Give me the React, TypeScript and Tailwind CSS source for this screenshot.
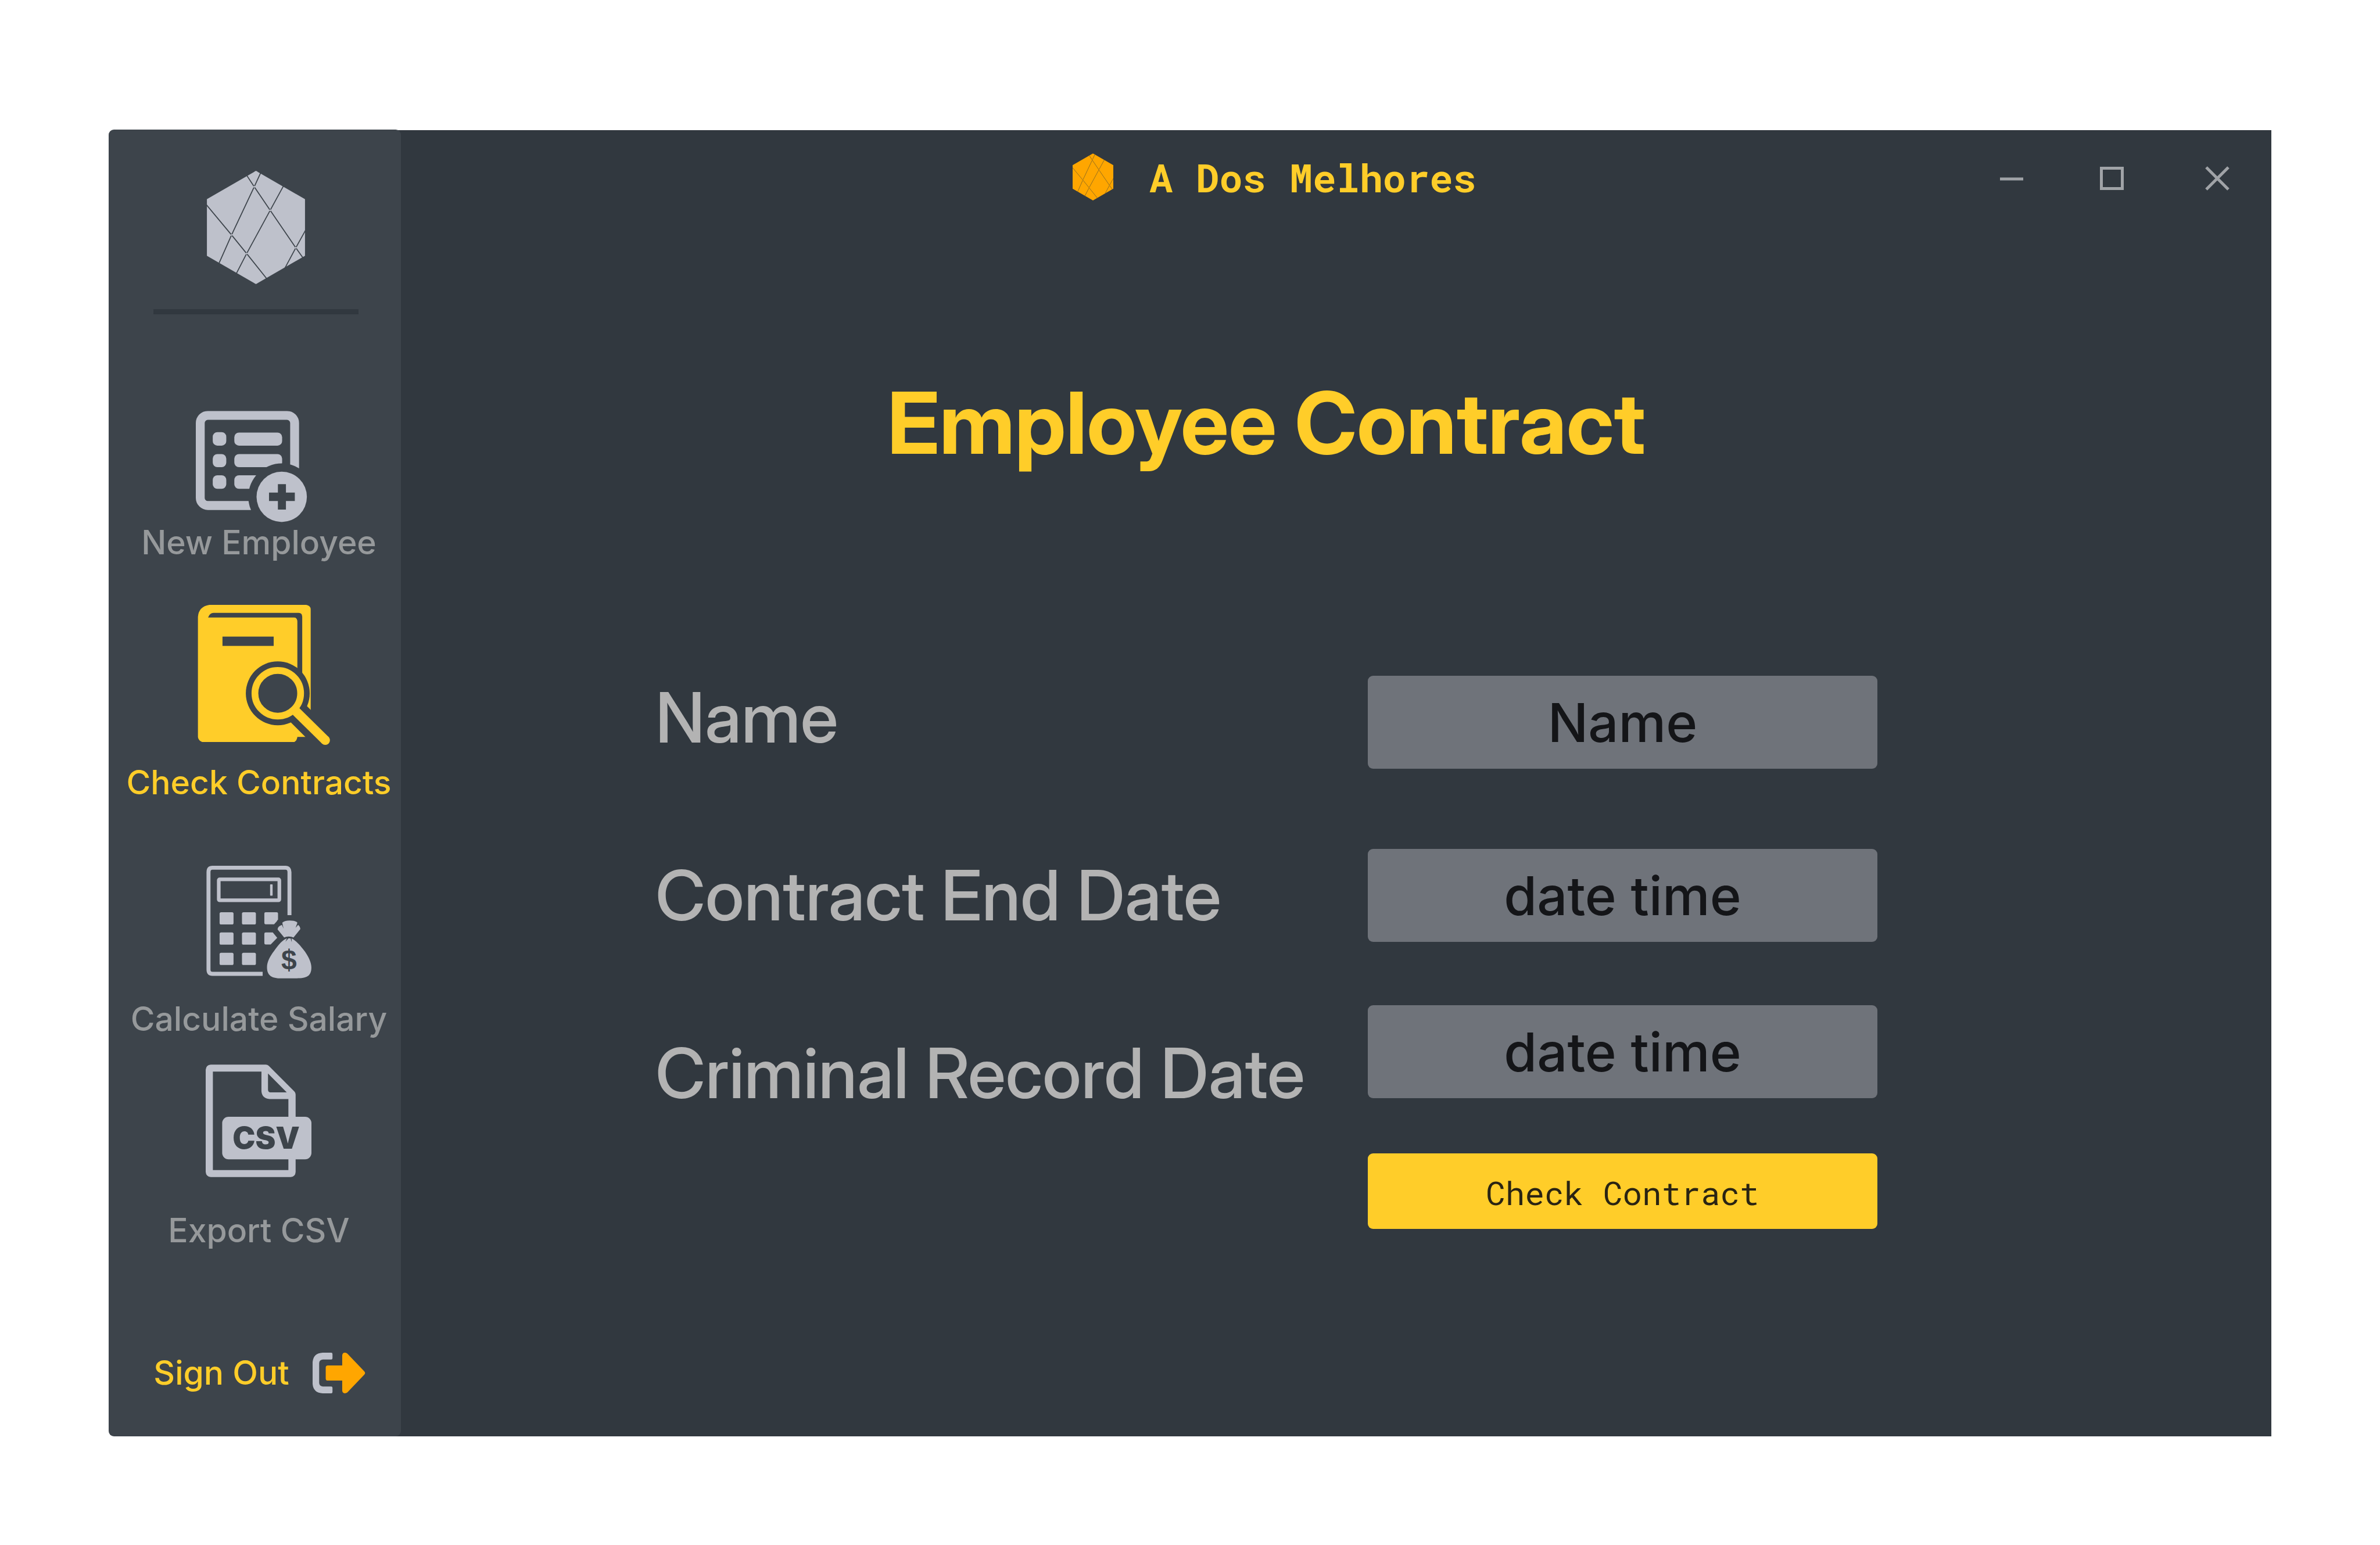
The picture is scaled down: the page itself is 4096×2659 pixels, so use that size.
import type { ReactNode } from "react";

/** Faceted hexagon used as the company mark. */
function HexLogo({ className, line }: { className: string; line: string }) {
  return (
    <svg viewBox="0 0 232 268" className={className} aria-hidden="true">
      <path
        d="M112 2.500Q116 -1.500 120 2.500L232 67V201L120 265.500Q116 269.500 112 265.500L0 201V67Z"
        fill="currentColor"
      />
      <g fill="none" stroke={line} strokeWidth="2.400">
        <path d="M94 10.500L112 37.700L149.700 93.300L210.300 182L228 207" />
        <path d="M128 3L112 37.700L58.300 151.700L28 220" />
        <path d="M181 36L149.700 93.300L94 195.700L69 244" />
        <path d="M-1 80.500L58.300 151.700L94 195.700L143 257" />
        <path d="M233 141L210.300 182L184 231" />
      </g>
      <g fill="currentColor">
        <circle cx="112" cy="37.700" r="2" />
        <circle cx="149.700" cy="93.300" r="2" />
        <circle cx="58.300" cy="151.700" r="2" />
        <circle cx="94" cy="195.700" r="2" />
        <circle cx="210.300" cy="182" r="2" />
      </g>
    </svg>
  );
}

function NewEmployeeIcon() {
  return (
    <svg viewBox="0 0 298 263" className="h-[192px] w-[217px]" aria-hidden="true">
      <mask id="badge-cut">
        <rect width="298" height="263" fill="white" />
        <circle cx="203" cy="203" r="79" fill="black" />
      </mask>
      <mask id="plus-cut">
        <rect width="298" height="263" fill="white" />
        <path d="M194 173h19v20h21v20h-21v20h-19v-20h-21v-20h21z" fill="black" />
      </mask>
      <g mask="url(#badge-cut)" fill="currentColor">
        <rect x="10.500" y="10.500" width="223" height="213" rx="18" fill="none" stroke="currentColor" strokeWidth="21" />
        <rect x="40" y="50" width="32" height="32" rx="11" />
        <rect x="40" y="102" width="32" height="31" rx="11" />
        <rect x="40" y="152" width="32" height="32" rx="11" />
        <rect x="91" y="51" width="113" height="31" rx="11" />
        <rect x="91" y="102" width="113" height="31" rx="11" />
        <rect x="91" y="152" width="113" height="32" rx="11" />
      </g>
      <circle cx="203" cy="203" r="59.500" fill="currentColor" mask="url(#plus-cut)" />
    </svg>
  );
}

function CheckContractsIcon() {
  return (
    <svg viewBox="-24 0 336 331" className="h-[241px] w-[245px]" aria-hidden="true">
      <mask id="book-cut">
        <rect x="-24" width="336" height="331" fill="white" />
        <path d="M24 30Q28 19 37 19H238Q246.500 19 246.500 28V230H235V40Q235 30 227 30Z" fill="black" />
        <rect x="58" y="75" width="121" height="22" fill="black" />
        <circle cx="188.700" cy="209" r="75.500" fill="black" />
        <path d="M190 210L312 332" stroke="black" strokeWidth="54" />
      </mask>
      <path
        d="M27 0H256Q266 2 266.500 10V312H235Q234 321 228 324H10Q1 321 0 312V28Q2 4 27 0Z"
        fill="currentColor"
        mask="url(#book-cut)"
      />
      <circle cx="188.700" cy="209" r="54" fill="none" stroke="currentColor" strokeWidth="16" />
      <path d="M231 251L301 320" stroke="currentColor" strokeWidth="22" />
      <circle cx="301" cy="320" r="11" fill="currentColor" />
    </svg>
  );
}

function CalculateSalaryIcon() {
  return (
    <svg viewBox="0 0 248 267" className="h-[194px] w-[181px]" aria-hidden="true">
      <path
        d="M196.500 117V15Q196.500 4.700 187 4.700H14Q4.700 4.700 4.700 15V246Q4.700 256 14 256H133"
        fill="none"
        stroke="currentColor"
        strokeWidth="9.400"
      />
      <rect x="29" y="32.300" width="143.500" height="49.500" rx="2" fill="none" stroke="currentColor" strokeWidth="8.600" />
      <rect x="150.600" y="44" width="6" height="27" rx="1" fill="currentColor" />
      <g fill="currentColor">
        <rect x="31" y="110" width="33" height="29" rx="3.500" />
        <rect x="84" y="110" width="33" height="29" rx="3.500" />
        <path d="M140 110H166Q169.400 110 169.400 113V127L166 132L160 138.700H140Q137 138.700 137 135V113Q137 110 140 110Z" />
        <rect x="31" y="158" width="33" height="29" rx="3.500" />
        <rect x="84" y="158" width="33" height="29" rx="3.500" />
        <path d="M140 158H157L167.500 170.700L152 186.500H140Q137 186.500 137 183V161Q137 158 140 158Z" />
        <rect x="31" y="206" width="33" height="29" rx="3.500" />
        <rect x="84" y="206" width="33" height="29" rx="3.500" />
        <path d="M179.500 135Q184 129.700 197 129.700Q211 129.700 215.300 135L211 147L217 140Q222 144 222.200 150L206 170Q202 168 194.700 167.700Q188 168 184 170L168.500 151Q168 144 178.600 140L182.500 149Z" />
        <path d="M190.500 172L187 180L194 172H199L202 181L201.500 172C211 176 225 192 233.700 204C243 218 248.400 230 248.400 241C248.400 261 238 266.700 214 266.700H178C153 266.700 143.300 259 143.300 240C143.300 228 150 215 160.200 201.700C170 187 182 174 190.500 172Z" />
      </g>
      <text x="195.500" y="245" textAnchor="middle" fill="#3d444b" className="font-['Liberation_Sans'] text-[66px] font-bold">
        $
      </text>
    </svg>
  );
}

function ExportCsvIcon() {
  return (
    <svg viewBox="0 0 250 266" className="h-[194px] w-[182px]" aria-hidden="true">
      <path
        fillRule="evenodd"
        fill="currentColor"
        d="M12 0H142Q146 0 149 3L210 64Q212.600 67 212.600 71V254Q212 265 201 266H12Q1 265 0 254V12Q1 1 12 0ZM17 16.500V249.500H195.500V81.500H151Q133 80 131.800 63V16.500ZM147.300 21V60Q148 65.500 152 65.700H191.600Z"
      />
      <rect x="39" y="123.500" width="211" height="100.500" rx="15" fill="currentColor" />
      <text x="143" y="199" textAnchor="middle" fill="#3d444b" className="font-['Inter'] text-[72px] font-black">
        CSV
      </text>
    </svg>
  );
}

function SignOutIcon() {
  return (
    <svg viewBox="0 0 125 96" className="h-[70px] w-[91px]" aria-hidden="true">
      <path
        d="M24 0H44Q47 0 47 3V13Q47 16 44 16H24Q15.500 17 15.500 25V71Q15.500 79 24 80H44Q47 80 47 83V93Q47 96 44 96H24Q2 95 0 74V22Q2 1 24 0Z"
        fill="#bec1cb"
      />
      <path
        d="M36 30H70V6Q71 0 76 0Q79 0 82 2L122 44Q126 48 122 52L82 94Q79 96 76 96Q71 96 70 90V66H36Q31 66 31 61V35Q31 30 36 30Z"
        fill="#ffa600"
      />
    </svg>
  );
}

function NavItem({ icon, label, tone, gap }: { icon: ReactNode; label: string; tone: "idle" | "active"; gap: string }) {
  const active = tone === "active";
  return (
    <button
      type="button"
      aria-current={active ? "page" : undefined}
      className={`flex flex-col items-center text-[57px] leading-[70px] font-medium whitespace-nowrap ${gap} ${
        active ? "text-[#ffcd29]" : "text-[#bec1cb]"
      }`}
    >
      {icon}
      <span className={active ? "text-[#ffcd29]" : "text-[#96999b]"}>{label}</span>
    </button>
  );
}

function Sidebar() {
  return (
    <aside className="relative z-10 flex w-[503px] shrink-0 flex-col rounded-[9px] bg-[#3d444b] pt-[71px] pb-[74px]">
      <div className="flex flex-col items-center pl-[4px]">
        <HexLogo className="h-[195px] w-[169px] text-[#bec1cb]" line="#3d444b" />
        <hr className="mt-[43px] h-[9px] w-[353px] border-0 bg-[#31383f]" />
      </div>
      <nav className="mt-[166px] flex flex-col items-center pl-[14px]">
        <NavItem icon={<NewEmployeeIcon />} label="New Employee" tone="idle" gap="" />
        <div className="h-[72px]" />
        <NavItem icon={<CheckContractsIcon />} label="Check Contracts" tone="active" gap="gap-[30px]" />
        <div className="h-[108px]" />
        <NavItem icon={<CalculateSalaryIcon />} label="Calculate Salary" tone="idle" gap="gap-[35px]" />
        <div className="h-[43px]" />
        <NavItem icon={<ExportCsvIcon />} label="Export CSV" tone="idle" gap="gap-[57px]" />
      </nav>
      <button
        type="button"
        className="mt-auto flex items-center justify-center gap-[40px] pl-[16px] text-[57px] leading-[70px] font-medium whitespace-nowrap text-[#ffcd29]"
      >
        Sign Out
        <SignOutIcon />
      </button>
    </aside>
  );
}

function TitleBar() {
  return (
    <header className="grid h-[161px] grid-cols-[1153fr_auto_1365fr] items-center">
      <div />
      <div className="flex items-center gap-[62px]">
        <HexLogo className="h-[81px] w-[70px] text-[#ffa600]" line="#6f5a2a" />
        <span className="font-['Roboto_Mono','Liberation_Mono',monospace] text-[67px] leading-[88px] font-bold whitespace-nowrap text-[#ffcd29]">
          A Dos Melhores
        </span>
      </div>
      <div className="flex items-center justify-end pt-[5px] pr-[70px] text-[#a0a3a7]">
        <button type="button" aria-label="Minimize" className="mr-[126px]">
          <svg viewBox="0 0 46 46" className="size-[46px]" aria-hidden="true">
            <path d="M3 24H43" stroke="currentColor" strokeWidth="5" />
          </svg>
        </button>
        <button type="button" aria-label="Maximize" className="mr-[136px]">
          <svg viewBox="0 0 46 46" className="size-[46px]" aria-hidden="true">
            <rect x="5.500" y="5.500" width="36" height="35" fill="none" stroke="currentColor" strokeWidth="5" />
          </svg>
        </button>
        <button type="button" aria-label="Close">
          <svg viewBox="0 0 46 46" className="size-[46px]" aria-hidden="true">
            <path d="M4 4L42 42M42 4L4 42" stroke="currentColor" strokeWidth="5" />
          </svg>
        </button>
      </div>
    </header>
  );
}

const inputClass =
  "h-[160px] w-full rounded-[9px] bg-[#6f737a] text-center text-[92px] font-medium text-[#141518] outline-none placeholder:text-[#141518] placeholder:opacity-100";

function ContractForm() {
  return (
    <form className="mt-[347px] flex justify-between" onSubmit={(e) => e.preventDefault()}>
      <div className="mt-[2px] flex flex-col gap-[166px] font-['Inter_Display','Inter',sans-serif] text-[119px] leading-[140px] font-medium whitespace-nowrap text-[#b3b3b3]">
        <label htmlFor="name">Name</label>
        <label htmlFor="contract-end">Contract End Date</label>
        <label htmlFor="criminal-record">Criminal Record Date</label>
      </div>
      <div className="flex w-[877px] flex-col">
        <input id="name" type="text" placeholder="Name" className={inputClass} />
        <input id="contract-end" type="text" placeholder="date time" className={`mt-[138px] ${inputClass}`} />
        <input id="criminal-record" type="text" placeholder="date time" className={`mt-[109px] ${inputClass}`} />
        <button
          type="submit"
          className="mt-[95px] h-[130px] rounded-[9px] bg-[#ffcd29] pt-[4px] font-['Roboto_Mono','Liberation_Mono',monospace] text-[56px] text-[#2a2413]"
        >
          Check Contract
        </button>
      </div>
    </form>
  );
}

export default function App() {
  return (
    <div className="flex min-h-screen bg-white pt-[223px] pr-[187px] pb-[187px] pl-[187px] font-['Inter',sans-serif]">
      <Sidebar />
      <div className="mt-px -ml-[12px] flex-1 bg-[#31383f] pl-[12px]">
        <TitleBar />
        <main className="pr-[678px] pl-[438px]">
          <h1 className="mt-[255px] text-center font-['Inter_Display','Inter',sans-serif] text-[147px] leading-[176px] font-bold whitespace-nowrap text-[#ffcd29]">
            Employee Contract
          </h1>
          <ContractForm />
        </main>
      </div>
    </div>
  );
}
